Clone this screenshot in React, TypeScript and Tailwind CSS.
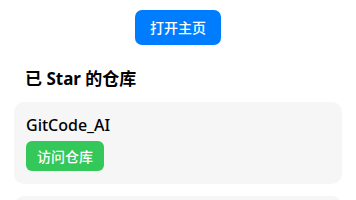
export default function App() {
  const repos = ["GitCode_AI", "GitCode_Web"];

  return (
    <div
      className="flex min-h-screen flex-col bg-white px-[14px] text-black"
      style={{ fontFamily: '"Noto Sans", "Noto Sans CJK SC", sans-serif' }}
    >
      <div className="flex justify-center pt-[10px]">
        <button className="flex h-[35px] w-[86px] items-center justify-center rounded-[7px] bg-[#007dff] text-[14px] font-medium text-white">
          打开主页
        </button>
      </div>

      <h2 className="mt-[22px] px-[11px] text-[17px] font-bold leading-[24px]">已 Star 的仓库</h2>

      <div className="mt-[11px] flex flex-col gap-[12px]">
        {repos.map((name) => (
          <div key={name} className="flex flex-col items-start rounded-[10px] bg-[#f6f6f6] px-[12px] pb-[13px] pt-[12px]">
            <span className="text-[16px] font-medium leading-[22px]">{name}</span>
            <button className="mt-[5px] flex h-[30px] w-[78px] items-center justify-center rounded-[6px] bg-[#34c759] text-[14px] font-medium text-white">
              访问仓库
            </button>
          </div>
        ))}
      </div>
    </div>
  );
}
